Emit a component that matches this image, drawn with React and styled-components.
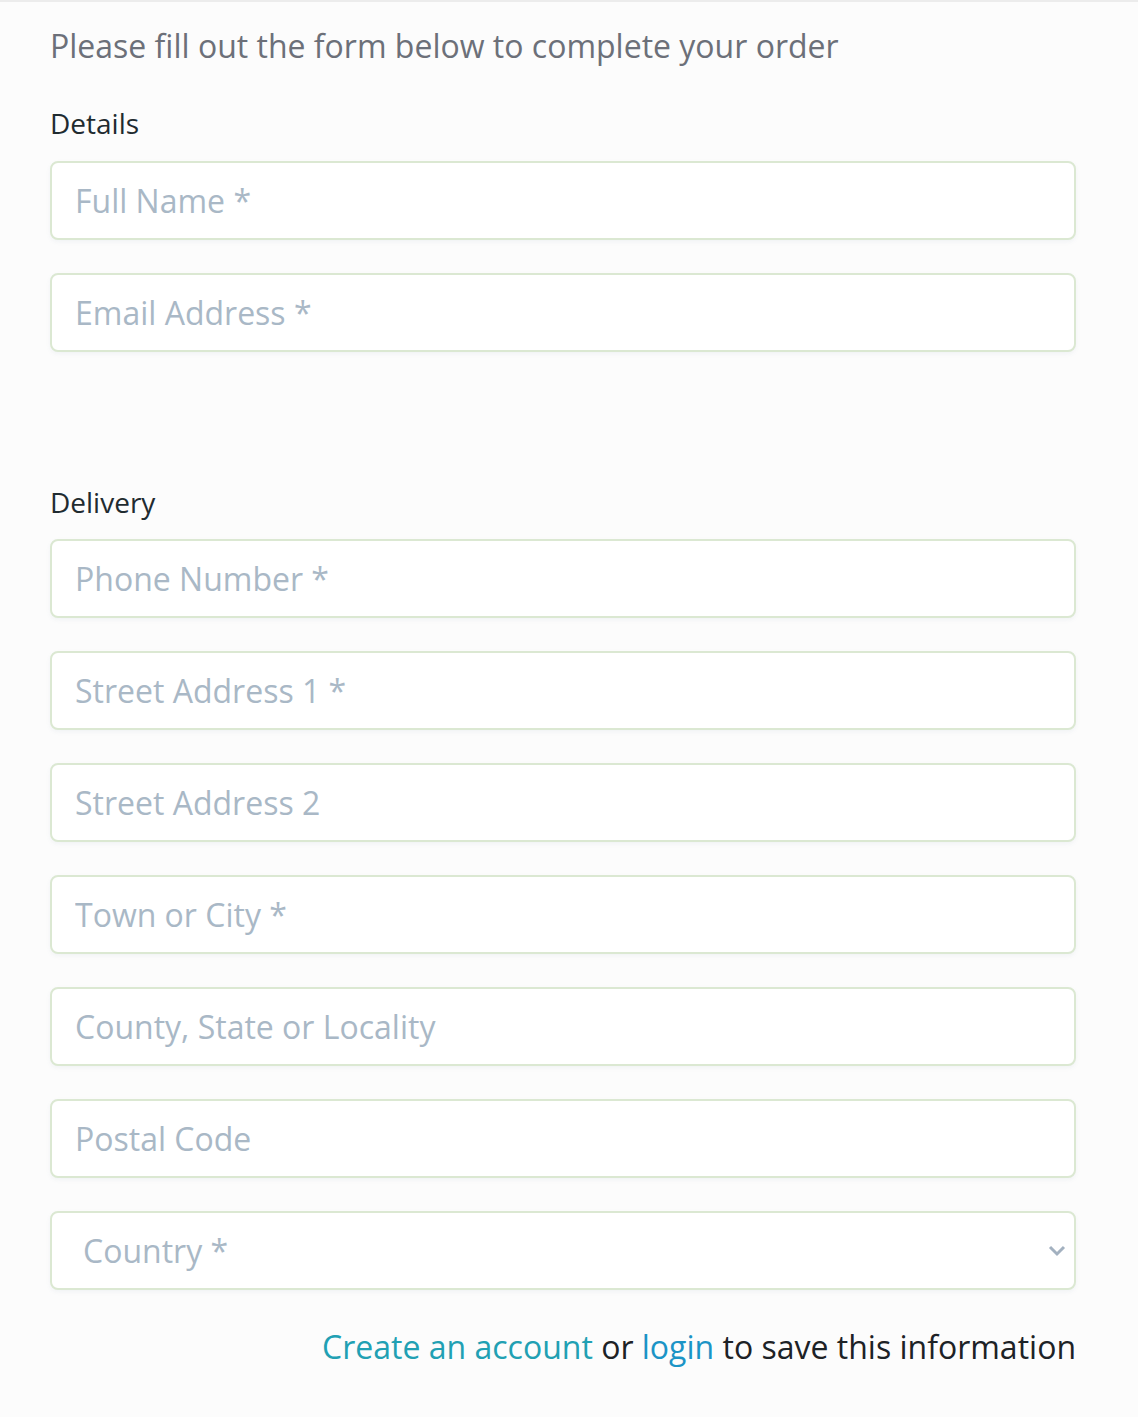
import React from "react";
import styled, { createGlobalStyle } from "styled-components";

const Global = createGlobalStyle`
  html, body { margin: 0; padding: 0; background: #fcfcfc; }
  body { font-family: "Open Sans", "Noto Sans", sans-serif; }
  * { box-sizing: border-box; }
`;

const Page = styled.div`
  border-top: 2px solid #ececec;
  padding: 22px 62px 50px 50px;
  min-height: 1417px;
`;

const Intro = styled.p`
  margin: 0;
  font-size: 32px;
  line-height: 44px;
  color: #6c7079;
`;

const Section = styled.section`
  display: flex;
  flex-direction: column;
  gap: 33px;
  margin-top: ${(p) => p.$top}px;
`;

const SectionTitle = styled.h3`
  margin: 0 0 ${(p) => p.$pull}px;
  font-weight: 400;
  font-size: 28px;
  line-height: 38px;
  color: #1f2b30;
`;

const Field = styled.input`
  width: 100%;
  height: 79px;
  border: 2px solid #dbe8d2;
  border-radius: 8px;
  background: #fff;
  box-shadow: 0 2px 4px rgba(120, 140, 160, 0.08);
  padding: 0 23px;
  font-family: "Open Sans", sans-serif;
  font-size: 32px;
  color: #333;
  outline: none;
  &::placeholder { color: #a9b8c6; }
`;

const SelectWrap = styled.div`
  position: relative;
`;

const Select = styled.select`
  appearance: none;
  width: 100%;
  height: 79px;
  border: 2px solid #dbe8d2;
  border-radius: 8px;
  background: #fff;
  box-shadow: 0 2px 4px rgba(120, 140, 160, 0.08);
  padding: 0 31px;
  font-family: "Open Sans", sans-serif;
  font-size: 32px;
  color: #a9b8c6;
  outline: none;
`;

const Chevron = styled.svg`
  position: absolute;
  right: 8px;
  top: 50%;
  transform: translateY(-50%);
  pointer-events: none;
`;

const Footer = styled.p`
  margin: 35px 0 0;
  text-align: right;
  font-size: 32px;
  line-height: 44px;
  color: #1d2226;
`;

const Link = styled.a`
  color: ${(p) => p.$tone};
  text-decoration: none;
`;

export default function App() {
  return (
    <>
      <Global />
      <Page>
        <Intro>Please fill out the form below to complete your order</Intro>
        <Section $top={36}>
          <SectionTitle $pull={-14}>Details</SectionTitle>
          <Field placeholder="Full Name *" />
          <Field placeholder="Email Address *" />
        </Section>
        <Section $top={131}>
          <SectionTitle $pull={-15}>Delivery</SectionTitle>
          <Field placeholder="Phone Number *" />
          <Field placeholder="Street Address 1 *" />
          <Field placeholder="Street Address 2" />
          <Field placeholder="Town or City *" />
          <Field placeholder="County, State or Locality" />
          <Field placeholder="Postal Code" />
          <SelectWrap>
            <Select defaultValue="">
              <option value="" disabled>Country *</option>
            </Select>
            <Chevron width="22" height="14" viewBox="0 0 22 14">
              <path d="M4 3 L11 10 L18 3" fill="none" stroke="#a3b1c0" strokeWidth="3" />
            </Chevron>
          </SelectWrap>
        </Section>
        <Footer>
          <Link href="#" $tone="#21a0b3">Create an account</Link> or{" "}
          <Link href="#" $tone="#1b94c6">login</Link> to save this information
        </Footer>
      </Page>
    </>
  );
}
